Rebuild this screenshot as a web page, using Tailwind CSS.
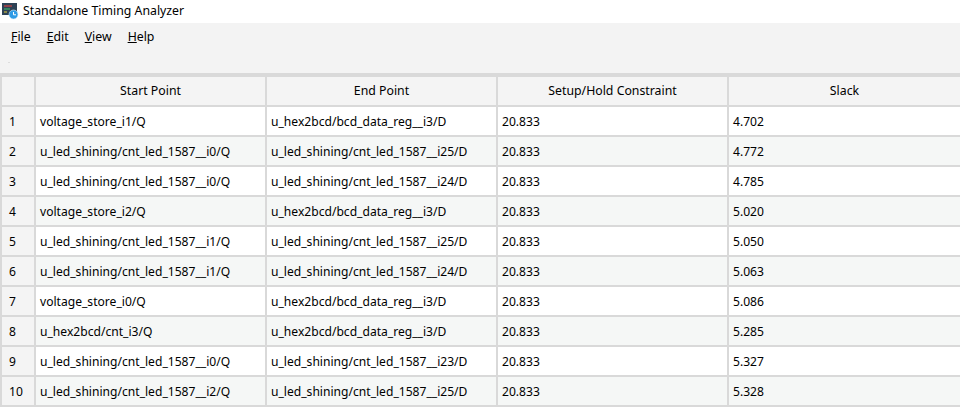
<!DOCTYPE html>
<html lang="en">
  <head>
    <meta charset="UTF-8" />
    <title>Standalone Timing Analyzer</title>
    <script src="https://cdn.jsdelivr.net/npm/@tailwindcss/browser@4"></script>
  </head>
  <body class="w-[960px] h-[407px] overflow-hidden bg-[#f3f3f3] font-['Noto_Sans',sans-serif] text-[12.1px] text-black">
    <div class="h-[23px] bg-white flex items-center">
      <svg class="w-[20px] h-[23px] shrink-0" viewBox="0 0 20 23">
        <rect x="2" y="3" width="15" height="12" fill="#2f4356"/>
        <rect x="4" y="5.5" width="8" height="1" fill="#f0453e"/>
        <rect x="4" y="8.5" width="6" height="1" fill="#3fc46a"/>
        <rect x="4" y="11.5" width="3" height="1" fill="#e8d23c"/>
        <circle cx="13.5" cy="14.5" r="4.5" fill="#2e9be6" stroke="#d8eefc" stroke-width="0.6"/>
        <path d="M13.5 12V14.8H16" fill="none" stroke="#fff" stroke-width="1"/>
      </svg>
      <span class="ml-[3px] text-[12.3px]">Standalone Timing Analyzer</span>
    </div>
    <div class="h-[28px] flex items-center pl-[11px] gap-[16px] text-[12.3px]">
      <span><u>F</u>ile</span>
      <span><u>E</u>dit</span>
      <span><u>V</u>iew</span>
      <span><u>H</u>elp</span>
    </div>
    <div class="h-[24px] border-b-2 border-[#d9d9d9] pt-[11px]">
      <div class="ml-[8px] w-[2px] h-[1px] bg-[#dddddd]"></div>
    </div>
    <table class="table-fixed border-collapse w-[960px]">
      <colgroup>
        <col class="w-[34px]" /><col class="w-[231px]" /><col class="w-[231px]" /><col class="w-[231px]" /><col class="w-[233px]" />
      </colgroup>
      <thead>
        <tr class="h-[30px] bg-[#f4f4f4] text-[12.3px] [&>th]:font-normal [&>th]:pt-[1px] [&>th]:border-2 [&>th]:border-[#d9d9d9]">
          <th></th><th>Start Point</th><th>End Point</th><th>Setup/Hold Constraint</th><th>Slack</th>
        </tr>
      </thead>
      <tbody class="[&_td]:border-2 [&_td]:border-[#d9d9d9] [&_td]:p-0 [&_td]:pl-[4px] [&_td]:pt-[3px] [&_tr]:h-[30px] [&_td:first-child]:bg-[#f4f4f4] [&_td:first-child]:pl-[7px]">
        <tr class="bg-white"><td>1</td><td>voltage_store_i1/Q</td><td>u_hex2bcd/bcd_data_reg__i3/D</td><td>20.833</td><td>4.702</td></tr>
        <tr class="bg-[#f5f7f6]"><td>2</td><td>u_led_shining/cnt_led_1587__i0/Q</td><td>u_led_shining/cnt_led_1587__i25/D</td><td>20.833</td><td>4.772</td></tr>
        <tr class="bg-white"><td>3</td><td>u_led_shining/cnt_led_1587__i0/Q</td><td>u_led_shining/cnt_led_1587__i24/D</td><td>20.833</td><td>4.785</td></tr>
        <tr class="bg-[#f5f7f6]"><td>4</td><td>voltage_store_i2/Q</td><td>u_hex2bcd/bcd_data_reg__i3/D</td><td>20.833</td><td>5.020</td></tr>
        <tr class="bg-white"><td>5</td><td>u_led_shining/cnt_led_1587__i1/Q</td><td>u_led_shining/cnt_led_1587__i25/D</td><td>20.833</td><td>5.050</td></tr>
        <tr class="bg-[#f5f7f6]"><td>6</td><td>u_led_shining/cnt_led_1587__i1/Q</td><td>u_led_shining/cnt_led_1587__i24/D</td><td>20.833</td><td>5.063</td></tr>
        <tr class="bg-white"><td>7</td><td>voltage_store_i0/Q</td><td>u_hex2bcd/bcd_data_reg__i3/D</td><td>20.833</td><td>5.086</td></tr>
        <tr class="bg-[#f5f7f6]"><td>8</td><td>u_hex2bcd/cnt_i3/Q</td><td>u_hex2bcd/bcd_data_reg__i3/D</td><td>20.833</td><td>5.285</td></tr>
        <tr class="bg-white"><td>9</td><td>u_led_shining/cnt_led_1587__i0/Q</td><td>u_led_shining/cnt_led_1587__i23/D</td><td>20.833</td><td>5.327</td></tr>
        <tr class="bg-[#f5f7f6]"><td>10</td><td>u_led_shining/cnt_led_1587__i2/Q</td><td>u_led_shining/cnt_led_1587__i25/D</td><td>20.833</td><td>5.328</td></tr>
      </tbody>
    </table>
  </body>
</html>
